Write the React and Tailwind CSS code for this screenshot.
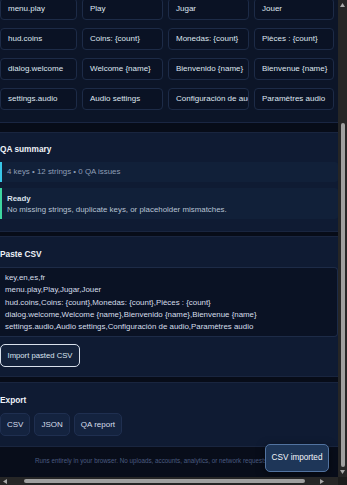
import React from "react";

const rows = [
  ["menu.play", "Play", "Jugar", "Jouer"],
  ["hud.coins", "Coins: {count}", "Monedas: {count}", "Pièces : {count}"],
  ["dialog.welcome", "Welcome {name}", "Bienvenido {name}", "Bienvenue {name}"],
  ["settings.audio", "Audio settings", "Configuración de audio", "Paramètres audio"],
];

const csvLines = [
  "key,en,es,fr",
  "menu.play,Play,Jugar,Jouer",
  "hud.coins,Coins: {count},Monedas: {count},Pièces : {count}",
  "dialog.welcome,Welcome {name},Bienvenido {name},Bienvenue {name}",
  "settings.audio,Audio settings,Configuración de audio,Paramètres audio",
];

function Tri({ dir }) {
  const pts = {
    up: "0,4 2.5,0 5,4",
    down: "0,0 2.5,4 5,0",
    left: "4,0 0,2.5 4,5",
    right: "0,0 4,2.5 0,5",
  }[dir];
  const w = dir === "up" || dir === "down" ? 5 : 4;
  const h = dir === "up" || dir === "down" ? 4 : 5;
  return (
    <svg width={w} height={h} viewBox={`0 0 ${w} ${h}`}>
      <polygon points={pts} fill="#a9a9a9" />
    </svg>
  );
}

export default function App() {
  return (
    <div className="w-[347px] h-[485px] flex flex-col overflow-hidden bg-[#080d1a] font-['Liberation_Sans',Arial,sans-serif]">
      <div className="flex flex-1 min-h-0">
        <div className="relative flex-1 min-w-0 flex flex-col overflow-hidden">
          {/* table panel */}
          <div className="h-[123px] shrink-0 bg-[#0c1528] border-b border-[#1a2642] overflow-hidden">
            <div className="-mt-[2px] grid grid-cols-[77px_81px_81px_80px] auto-rows-[22px] gap-x-[5px] gap-y-[8px]">
              {rows.map((r) =>
                r.map((c, i) => (
                  <div
                    key={r[0] + i}
                    className="flex items-center rounded-[4px] border border-[#1d2b47] bg-[#0a1224] px-[7px] text-[8px] text-[#dfe6f0] whitespace-nowrap overflow-hidden"
                  >
                    {c}
                  </div>
                ))
              )}
            </div>
          </div>
          <div className="h-[9px] shrink-0 bg-[#070c18]" />

          {/* QA summary */}
          <div className="h-[100px] shrink-0 bg-[#0f1b33] border-y border-[#19253f] pt-[11px] flex flex-col">
            <div className="h-[10px] leading-[10px] text-[8.3px] font-bold text-[#eef2f8]">QA summary</div>
            <div className="mt-[8px] h-[20px] flex items-center rounded-r-[3px] border-l-2 border-[#38c6e8] bg-[#112039] pl-[5px] text-[7.9px] text-[#8e9db5]">
              4 keys • 12 strings • 0 QA issues
            </div>
            <div className="mt-[6px] h-[31px] flex flex-col justify-center rounded-r-[3px] border-l-2 border-[#3ed6a0] bg-[#112039] pl-[5px] text-[7.9px] leading-[11px]">
              <div className="font-bold text-[#d8e0ea]">Ready</div>
              <div className="text-[#b7c2d3]">No missing strings, duplicate keys, or placeholder mismatches.</div>
            </div>
          </div>
          <div className="h-[4px] shrink-0 bg-[#070c18]" />

          {/* Paste CSV */}
          <div className="h-[141px] shrink-0 bg-[#0f1b33] border-y border-[#19253f] pt-[12px] flex flex-col">
            <div className="h-[10px] leading-[10px] text-[8.3px] font-bold text-[#eef2f8]">Paste CSV</div>
            <div className="mt-[8px] h-[70px] rounded-r-[4px] border border-l-0 border-[#1d2b47] bg-[#0a1224] pl-[5px] pt-[4px] text-[7.9px] leading-[12.25px] text-[#d6deea] whitespace-nowrap overflow-hidden">
              {csvLines.map((l) => (
                <div key={l}>{l}</div>
              ))}
            </div>
            <div className="mt-[7px] flex">
              <div className="h-[23px] w-[80px] flex items-center justify-center rounded-[5px] border-[1.5px] border-[#d9e1ec] bg-[#14223b] text-[7.7px] text-[#dbe4f0]">
                Import pasted CSV
              </div>
            </div>
          </div>
          <div className="h-[5px] shrink-0 bg-[#070c18]" />

          {/* Export */}
          <div className="h-[65px] shrink-0 bg-[#0f1b33] border-y border-[#19253f] pt-[12px] flex flex-col">
            <div className="h-[10px] leading-[10px] text-[8.3px] font-bold text-[#eef2f8]">Export</div>
            <div className="mt-[8px] flex gap-[4px]">
              {["CSV", "JSON", "QA report"].map((b) => (
                <div
                  key={b}
                  className="h-[23px] flex items-center rounded-[5px] border border-[#1f2f50] bg-[#14233f] px-[6px] text-[8px] text-[#d6deea]"
                >
                  {b}
                </div>
              ))}
            </div>
          </div>

          {/* footer */}
          <div className="flex-1 flex items-center pl-[35px] pb-[2px] text-[6.3px] text-[#4a5b80] whitespace-nowrap overflow-hidden">
            Runs entirely in your browser. No uploads, accounts, analytics, or network requests.
          </div>

          {/* toast */}
          <div className="absolute right-[9px] bottom-[5px] h-[28px] w-[64px] flex items-center justify-center rounded-[5px] border border-[#5273a0] bg-[#1e3658] text-[8.2px] text-[#f1f5fa] shadow-[0_2px_8px_rgba(0,0,0,0.5)]">
            CSV imported
          </div>
        </div>

        {/* vertical scrollbar */}
        <div className="w-[9px] shrink-0 bg-[#262626] flex flex-col items-center">
          <div className="h-[10px] flex items-center justify-center">
            <Tri dir="up" />
          </div>
          <div className="h-[113px]" />
          <div className="w-[4px] h-[344px] rounded-full bg-[#a0a0a0]" />
          <div className="flex-1 flex items-center justify-center">
            <Tri dir="down" />
          </div>
        </div>
      </div>

      {/* horizontal scrollbar */}
      <div className="h-[8px] shrink-0 flex bg-[#262626]">
        <div className="flex-1 flex items-center">
          <div className="w-[10px] flex justify-center">
            <Tri dir="left" />
          </div>
          <div className="w-[14px]" />
          <div className="w-[281px] h-[4px] rounded-full bg-[#a0a0a0]" />
          <div className="flex-1 flex justify-center">
            <Tri dir="right" />
          </div>
        </div>
        <div className="w-[9px] bg-[#1c1c1c]" />
      </div>
    </div>
  );
}
